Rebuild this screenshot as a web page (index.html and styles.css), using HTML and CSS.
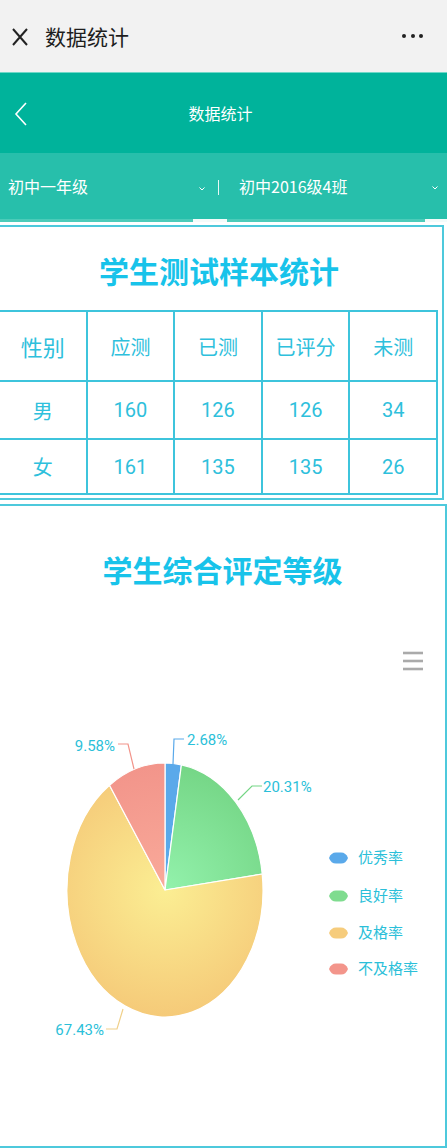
FILE: index.html
```html
<!DOCTYPE html>
<html lang="zh">
<head>
<meta charset="utf-8">
<title>数据统计</title>
<link rel="stylesheet" href="styles.css">
</head>
<body>
<div class="page">
  <div class="wx-bar">
    <svg class="wx-close" width="18" height="20" viewBox="0 0 18 20"><path d="M2 2 L16 18 M16 2 L2 18" stroke="#222" stroke-width="2" fill="none"/></svg>
    <span class="wx-title">数据统计</span>
    <span class="wx-more"><i></i><i></i><i></i></span>
  </div>
  <div class="app-header">
    <svg class="back" width="14" height="24" viewBox="0 0 14 24"><path d="M12 1 L2 12 L12 23" stroke="#fff" stroke-width="1.6" fill="none"/></svg>
    <span class="app-title">数据统计</span>
  </div>
  <div class="filters">
    <div class="filter-row">
      <div class="sel sel-grade">
        <span>初中一年级</span>
        <svg class="chev" width="8" height="6" viewBox="0 0 8 6"><path d="M1.5 1.5 L4 4 L6.5 1.5" stroke="#ffffff" stroke-width="1" fill="none"/></svg>
      </div>
      <span class="divider"></span>
      <div class="sel sel-class">
        <span>初中2016级4班</span>
        <svg class="chev" width="8" height="6" viewBox="0 0 8 6"><path d="M1.5 1.5 L4 4 L6.5 1.5" stroke="#ffffff" stroke-width="1" fill="none"/></svg>
      </div>
    </div>
    <div class="filter-strip"><span class="s1"></span><span class="s2"></span><span class="s3"></span><span class="s4"></span></div>
  </div>

  <section class="card card-table">
    <h2 class="card-title t1">学生测试样本统计</h2>
    <table class="stats">
      <tr class="head"><th>性别</th><th>应测</th><th>已测</th><th>已评分</th><th>未测</th></tr>
      <tr class="r1"><td class="cj">男</td><td>160</td><td>126</td><td>126</td><td>34</td></tr>
      <tr class="r2"><td class="cj">女</td><td>161</td><td>135</td><td>135</td><td>26</td></tr>
    </table>
  </section>

  <section class="card card-chart">
    <h2 class="card-title t2">学生综合评定等级</h2>
    <svg class="chart" width="443" height="540" viewBox="0 0 443 540">
      <defs>
        <radialGradient id="gy" cx="165" cy="289" r="130" gradientUnits="userSpaceOnUse">
          <stop offset="0" stop-color="#fbee93"/>
          <stop offset="1" stop-color="#f5c978"/>
        </radialGradient>
        <radialGradient id="gg" cx="165" cy="289" r="130" gradientUnits="userSpaceOnUse">
          <stop offset="0" stop-color="#93f2ac"/>
          <stop offset="1" stop-color="#74d585"/>
        </radialGradient>
        <radialGradient id="gr" cx="165" cy="289" r="130" gradientUnits="userSpaceOnUse">
          <stop offset="0" stop-color="#f9aa9a"/>
          <stop offset="1" stop-color="#f2948a"/>
        </radialGradient>
      </defs>
      <g class="menu" stroke="#aaaaaa" stroke-width="2.6">
        <line x1="403" y1="52" x2="423" y2="52"/>
        <line x1="403" y1="60" x2="423" y2="60"/>
        <line x1="403" y1="68" x2="423" y2="68"/>
      </g>
      <g stroke="#ffffff" stroke-width="1.2" stroke-linejoin="round">
        <path d="M165 289 L165 162 A98 127 0 0 1 181.4 163.8 Z" fill="#5aa9ea"/>
        <path d="M165 289 L181.4 163.8 A98 127 0 0 1 262.2 273 Z" fill="url(#gg)"/>
        <path d="M165 289 L262.2 273 A98 127 0 1 1 109.5 184.3 Z" fill="url(#gy)"/>
        <path d="M165 289 L109.5 184.3 A98 127 0 0 1 165 162 Z" fill="url(#gr)"/>
      </g>
      <g fill="none" stroke-width="1.2">
        <polyline points="173,163 174,138 184,138" stroke="#5aa9ea"/>
        <polyline points="238,199 252,185 262,185" stroke="#74d585"/>
        <polyline points="134,168 128,143 118,143" stroke="#f2948a"/>
        <polyline points="123,408 117,428 106,428" stroke="#f0d08a"/>
      </g>
      <g class="lbl">
        <text x="187" y="144">2.68%</text>
        <text x="263" y="191">20.31%</text>
        <text x="115" y="150" text-anchor="end">9.58%</text>
        <text x="104" y="434" text-anchor="end">67.43%</text>
      </g>
      <g class="legend">
        <path d="M329 257 Q331 251.5 336 251.5 L341 251.5 Q346 251.5 348 257 Q346 262.5 341 262.5 L336 262.5 Q331 262.5 329 257 Z" fill="#5aa9ea"/>
        <text x="358" y="262">优秀率</text>
        <path d="M329 295 Q331 289.5 336 289.5 L341 289.5 Q346 289.5 348 295 Q346 300.5 341 300.5 L336 300.5 Q331 300.5 329 295 Z" fill="#7fdc8f"/>
        <text x="358" y="300">良好率</text>
        <path d="M329 332 Q331 326.5 336 326.5 L341 326.5 Q346 326.5 348 332 Q346 337.5 341 337.5 L336 337.5 Q331 337.5 329 332 Z" fill="#f6cc7c"/>
        <text x="358" y="337">及格率</text>
        <path d="M329 368 Q331 362.5 336 362.5 L341 362.5 Q346 362.5 348 368 Q346 373.5 341 373.5 L336 373.5 Q331 373.5 329 368 Z" fill="#f3958b"/>
        <text x="358" y="373">不及格率</text>
      </g>
    </svg>
  </section>
</div>
</body>
</html>
```

FILE: styles.css
```css
html, body {
  margin: 0;
  padding: 0;
  background: #ffffff;
  overflow: hidden;
}
body {
  width: 447px;
  font-family: Roboto, "Noto Sans CJK SC", sans-serif;
}
.page {
  width: 447px;
  overflow: hidden;
}

/* WeChat top bar */
.wx-bar {
  height: 72px;
  background: #f2f2f2;
  display: flex;
  align-items: center;
  box-sizing: border-box;
  padding: 0 24px 0 11px;
}
.wx-close {
  margin-top: 2px;
}
.wx-title {
  margin-left: 16px;
  font-family: "Noto Sans CJK SC", sans-serif;
  font-size: 21px;
  color: #1e1e1e;
  line-height: 1;
}
.wx-more {
  margin-left: auto;
  display: flex;
  gap: 4.5px;
}
.wx-more i {
  width: 4px;
  height: 4px;
  border-radius: 50%;
  background: #222;
  display: block;
}

/* App header */
.app-header {
  height: 81px;
  background: #00b39b;
  border-top: 1px solid #6fd8c8;
  box-sizing: border-box;
  display: flex;
  align-items: center;
  position: relative;
  padding-left: 14px;
}
.back {
  margin-top: 2px;
}
.app-title {
  position: absolute;
  left: 0;
  right: 0;
  text-align: center;
  font-family: "Noto Sans CJK SC", sans-serif;
  font-size: 16px;
  color: #ffffff;
  margin-left: -6px;
}

/* Filters */
.filters {
  background: #27bfab;
}
.filter-row {
  height: 66px;
  display: flex;
  align-items: center;
  color: #ffffff;
  font-size: 16px;
  font-family: "Noto Sans CJK SC", sans-serif;
}
.sel {
  display: flex;
  align-items: center;
}
.sel-grade {
  width: 207px;
  box-sizing: border-box;
  padding-left: 8px;
}
.sel-grade .chev {
  margin-left: auto;
  margin-right: 1px;
  margin-top: 6px;
}
.divider {
  width: 1px;
  height: 15px;
  background: #e8f8f5;
  margin-left: 11px;
  margin-top: 3px;
}
.sel-class {
  flex: 1;
  padding-left: 20px;
  padding-right: 8px;
}
.sel-class .chev {
  margin-left: auto;
  margin-top: 4px;
}
.filter-strip {
  display: flex;
  height: 3px;
}
.filter-strip span {
  display: block;
  height: 3px;
}
.filter-strip .s1 { width: 193px; background: #4ccbb9; }
.filter-strip .s2 { width: 34px; background: #f4fbfa; }
.filter-strip .s3 { width: 198px; background: #4ccbb9; }
.filter-strip .s4 { flex: 1; background: #f4fbfa; }

/* Cards */
.card {
  background: #ffffff;
  border: 2px solid #4dc9dc;
  margin-left: -2px;
  box-sizing: border-box;
}
.card-title {
  margin: 0;
  text-align: center;
  font-family: "Noto Sans CJK SC", sans-serif;
  font-weight: 700;
  color: #18c3ea;
  line-height: 40px;
}
.card-table {
  width: 446px;
  margin-top: 3px;
  padding: 0 4px 3px 0;
}
.t1 {
  font-size: 30px;
  padding: 23px 0 20px 0;
}
.stats {
  border-collapse: collapse;
  width: 440px;
  margin-left: -2px;
  table-layout: fixed;
  color: #2ec0dc;
}
.stats th, .stats td {
  border: 2px solid #3ec4dc;
  text-align: center;
  padding: 0;
}
.stats th {
  font-family: "Noto Sans CJK SC", sans-serif;
  font-weight: 400;
  font-size: 20px;
  height: 68px;
}
.stats tr.head th:first-child {
  font-size: 22px;
}
.stats td {
  font-size: 20px;
}
.stats td.cj {
  font-family: "Noto Sans CJK SC", sans-serif;
}
.stats tr.r1 td { height: 56px; }
.stats tr.r2 td { height: 53px; }

.card-chart {
  width: 449px;
  margin-top: 4px;
  height: 644px;
}
.t2 {
  font-size: 30px;
  padding: 43px 0 12px 0;
}
.chart {
  display: block;
}
.lbl text {
  font-family: Roboto, sans-serif;
  font-size: 15px;
  fill: #2bbfd9;
}
.legend text {
  font-family: "Noto Sans CJK SC", sans-serif;
  font-size: 15px;
  fill: #2bbfd9;
}
```
